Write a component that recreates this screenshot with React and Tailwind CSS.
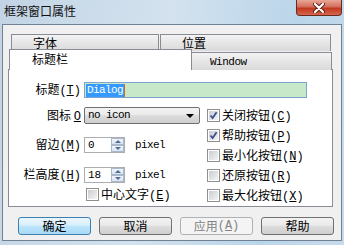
import { Fragment } from "react";

const mono = "font-['Liberation_Mono','Noto_Sans_CJK_SC',monospace]";

function Acc({ k, paren = true }) {
  // accelerator key, underlined like the win32 dialogs do
  return (
    <span className={mono}>
      {paren && "("}
      <span className="underline underline-offset-[1px]">{k}</span>
      {paren && ")"}
    </span>
  );
}

function CheckBox({ checked, label, k }) {
  return (
    <div className="flex items-center h-[13px]">
      <div className="w-[13px] h-[13px] border border-[#8e8f8f] bg-white p-[1px] shrink-0">
        <div className="w-full h-full bg-[linear-gradient(135deg,#c9ccd1,#f4f4f4)] relative">
          {checked && (
            <svg viewBox="0 0 9 9" className="absolute inset-0 w-[9px] h-[9px]">
              <path d="M1.5 4.5 L3.6 7 L7.6 1.2" fill="none" stroke="#3c4f92" strokeWidth="1.8" />
            </svg>
          )}
        </div>
      </div>
      <span className="ml-[2px] leading-[13px] whitespace-nowrap">
        {label}
        <Acc k={k} />
      </span>
    </div>
  );
}

function Spinner({ value }) {
  return (
    <div className="w-[41px] h-[16px] border border-[#abadb3] bg-white flex">
      <div className={`flex-1 pl-[3px] text-[11px] leading-[14px] ${mono}`}>{value}</div>
      <div className="w-[13px] flex flex-col">
        {["up", "down"].map((d) => (
          <div
            key={d}
            className="flex-1 border border-[#a9b9cc] bg-[linear-gradient(#f3f6fa,#d8e2ee)] flex items-center justify-center"
          >
            <div
              className={
                d === "up"
                  ? "w-0 h-0 border-l-[3px] border-r-[3px] border-b-[3px] border-l-transparent border-r-transparent border-b-[#4d6c9e]"
                  : "w-0 h-0 border-l-[3px] border-r-[3px] border-t-[3px] border-l-transparent border-r-transparent border-t-[#4d6c9e]"
              }
            />
          </div>
        ))}
      </div>
    </div>
  );
}

function Btn({ children, primary, disabled }) {
  let style =
    "border-[#707070] bg-[linear-gradient(#f2f2f2,#ebebeb_45%,#dddddd_50%,#cfcfcf)] text-black";
  if (primary)
    style =
      "border-[#3c7fb1] bg-[linear-gradient(#eaf6fd,#d9f0fc_45%,#bee6fd_50%,#a7d9f5)] text-black";
  if (disabled) style = "border-[#adb2b5] bg-[#f4f4f4] text-[#838383]";
  return (
    <div
      className={`w-[73px] h-[18px] border rounded-[3px] flex items-center justify-center leading-[14px] ${style}`}
    >
      {children}
    </div>
  );
}

export default function App() {
  const checks = [
    { label: "关闭按钮", k: "C", checked: true },
    { label: "帮助按钮", k: "P", checked: true },
    { label: "最小化按钮", k: "N" },
    { label: "还原按钮", k: "R" },
    { label: "最大化按钮", k: "X" },
  ];

  return (
    <div className="w-[344px] h-[245px] overflow-hidden flex flex-col bg-[linear-gradient(100deg,#c2d4e5,#d3e2ee_45%,#bad5ea_78%,#c8dbeb)] font-['Noto_Sans_CJK_SC',sans-serif] text-[12px] text-black">
      {/* title bar */}
      <div className="h-[24px] flex items-start shrink-0">
        <div className="pl-[4px] pt-[3px] leading-[15px] text-[12px] text-[#101010]">框架窗口属性</div>
        <div className="ml-auto mr-[2px] w-[46px] h-[16px] rounded-b-[4px] border border-t-0 border-[#6b2a1f] bg-[linear-gradient(#e8a697,#d36e5a_45%,#c2381f_55%,#d5674c)] flex items-center justify-center">
          <svg viewBox="0 0 12 10" className="w-[12px] h-[10px]">
            <path d="M2 1 L10 9 M10 1 L2 9" stroke="#5a2016" strokeWidth="4" strokeLinecap="round" />
            <path d="M2 1 L10 9 M10 1 L2 9" stroke="#ffffff" strokeWidth="2.2" strokeLinecap="round" />
          </svg>
        </div>
      </div>

      {/* client */}
      <div className="mx-[2px] h-[217px] border border-[#6f8193] bg-[#f0f0f0] flex flex-col">
        <div className="pt-[9px] pl-[5px]">
          {/* back tab row */}
          <div className="flex pl-[3px]">
            <div className="w-[148px] h-[17px] border border-b-0 border-[#898c95] bg-[linear-gradient(#f3f3f3,#e6e6e6_50%,#dadada)] pl-[21px] pt-[1px] leading-[14px]">
              字体
            </div>
            <div className="ml-[1px] w-[171px] h-[17px] border border-b-0 border-[#898c95] bg-[linear-gradient(#f3f3f3,#e6e6e6_50%,#dadada)] pl-[21px] pt-[1px] leading-[14px]">
              位置
            </div>
          </div>
          {/* front tab row */}
          <div className="flex items-end -mt-[2px] pl-[1px]">
            <div className="relative z-10 w-[183px] h-[21px] border border-b-0 border-[#898c95] bg-white pl-[22px] pt-[2px] leading-[14px]">
              标题栏
            </div>
            <div className={`w-[140px] h-[18px] border border-l-0 border-b-0 border-[#898c95] bg-[linear-gradient(#f3f3f3,#e6e6e6_50%,#dadada)] pl-[18px] pt-[3px] text-[11px] tracking-[-0.5px] leading-[12px] ${mono}`}>
              Window
            </div>
          </div>
          {/* page */}
          <div className="-mt-[1px] w-[325px] h-[138px] border border-[#898c95] bg-white flex flex-col">
            <div className="mt-[12px] flex items-center">
              <div className="w-[75px] pr-[3px] text-right leading-[14px] whitespace-nowrap">
                标题<Acc k="T" />
              </div>
              <div className="w-[223px] h-[16px] border border-[#7da2ce] bg-[#c7e8c9] flex items-center pl-[1px]">
                <span className={`bg-[#3399ff] text-white text-[11px] tracking-[-0.6px] leading-[13px] px-[1px] ${mono}`}>
                  Dialog
                </span>
                <span className="w-[1px] h-[13px] bg-[#c8701e]" />
              </div>
            </div>

            <div className="flex mt-[9px]">
              <div className="w-[196px] flex flex-col">
                <div className="flex items-center h-[17px]">
                  <div className="w-[75px] pr-[3px] text-right leading-[14px] whitespace-nowrap">
                    图标 <Acc k="O" paren={false} />
                  </div>
                  <div className="w-[116px] h-[17px] border border-[#707070] rounded-[2px] bg-[linear-gradient(#f2f2f2,#ebebeb_45%,#dddddd_50%,#cfcfcf)] flex items-center pl-[3px]">
                    <span className={`text-[11px] tracking-[-0.6px] leading-[13px] ${mono}`}>no icon</span>
                    <div className="ml-auto mr-[5px] w-0 h-0 border-l-[4px] border-r-[4px] border-t-[4px] border-l-transparent border-r-transparent border-t-black" />
                  </div>
                </div>
                {[
                  { label: "留边", k: "M", v: "0", mt: "mt-[13px]" },
                  { label: "栏高度", k: "H", v: "18", mt: "mt-[14px]" },
                ].map((r) => (
                  <div key={r.k} className={`flex items-center h-[16px] ${r.mt}`}>
                    <div className="w-[75px] pr-[3px] text-right leading-[14px] whitespace-nowrap">
                      {r.label}
                      <Acc k={r.k} />
                    </div>
                    <Spinner value={r.v} />
                    <span className={`ml-[10px] text-[11px] tracking-[-0.6px] leading-[13px] ${mono}`}>pixel</span>
                  </div>
                ))}
                <div className="mt-[5px] pl-[77px]">
                  <CheckBox label="中心文字" k="E" />
                </div>
              </div>
              <div className="pl-[2px] pt-[2px] flex flex-col gap-[7px]">
                {checks.map((c) => (
                  <Fragment key={c.k}>
                    <CheckBox {...c} />
                  </Fragment>
                ))}
              </div>
            </div>
          </div>
        </div>

        {/* buttons */}
        <div className="mt-[10px] pl-[15px] flex gap-[8px]">
          <Btn primary>确定</Btn>
          <Btn>取消</Btn>
          <Btn disabled>
            应用<Acc k="A" />
          </Btn>
          <Btn>帮助</Btn>
        </div>
      </div>
    </div>
  );
}
